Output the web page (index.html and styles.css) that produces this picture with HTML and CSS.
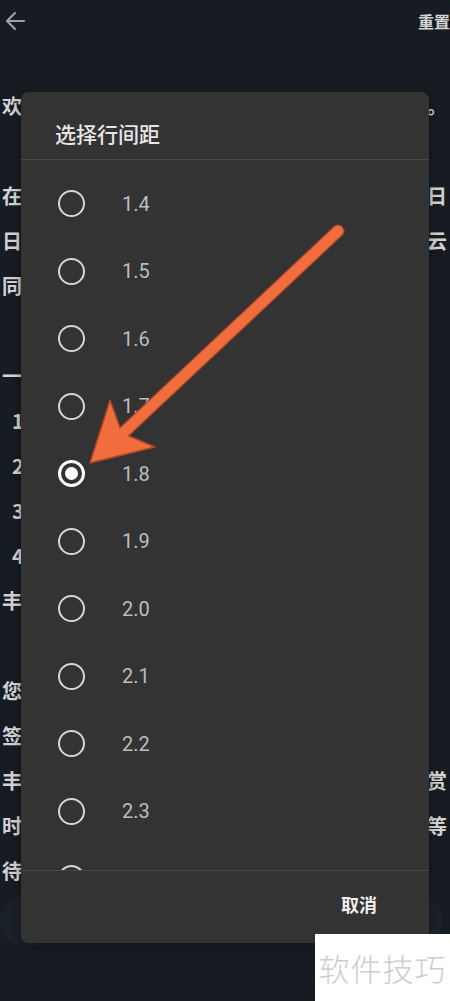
FILE: index.html
```html
<!DOCTYPE html>
<html lang="zh-CN">
<head>
    <meta charset="UTF-8">
    <meta name="viewport" content="width=device-width, initial-scale=1.0">
    <title>选择行间距</title>
    <link rel="stylesheet" href="styles.css">
</head>
<body>
    <div class="topbar">
        <svg class="back" width="22" height="20" viewBox="0 0 22 20">
            <path d="M20 10H3M11 2L3 10l8 8" fill="none" stroke="#9ba1a6" stroke-width="2.2" stroke-linecap="round" stroke-linejoin="round"/>
        </svg>
        <span class="reset">重置</span>
    </div>

    <div class="content">
        <div class="line"><span>欢</span><span>。</span></div>
        <div class="line blank"></div>
        <div class="line"><span>在</span><span>日</span></div>
        <div class="line"><span>日</span><span>云</span></div>
        <div class="line"><span>同</span></div>
        <div class="line blank"></div>
        <div class="line"><span>一</span></div>
        <div class="line item"><span>1</span></div>
        <div class="line item"><span>2</span></div>
        <div class="line item"><span>3</span></div>
        <div class="line item"><span>4</span></div>
        <div class="line"><span>丰</span></div>
        <div class="line blank"></div>
        <div class="line"><span>您</span></div>
        <div class="line"><span>签</span></div>
        <div class="line"><span>丰</span><span>赏</span></div>
        <div class="line"><span>时</span><span>等</span></div>
        <div class="line"><span>待</span></div>
        <div class="bottom-bar"></div>
    </div>

    <div class="dialog">
        <div class="dialog-title">选择行间距</div>
        <div class="options">
            <div class="option"><span class="radio"></span><span class="value">1.4</span></div>
            <div class="option"><span class="radio"></span><span class="value">1.5</span></div>
            <div class="option"><span class="radio"></span><span class="value">1.6</span></div>
            <div class="option"><span class="radio"></span><span class="value">1.7</span></div>
            <div class="option"><span class="radio checked"></span><span class="value">1.8</span></div>
            <div class="option"><span class="radio"></span><span class="value">1.9</span></div>
            <div class="option"><span class="radio"></span><span class="value">2.0</span></div>
            <div class="option"><span class="radio"></span><span class="value">2.1</span></div>
            <div class="option"><span class="radio"></span><span class="value">2.2</span></div>
            <div class="option"><span class="radio"></span><span class="value">2.3</span></div>
            <div class="option"><span class="radio"></span><span class="value">2.4</span></div>
        </div>
        <div class="dialog-footer">
            <span class="cancel">取消</span>
        </div>
    </div>

    <!-- annotation arrow -->
    <svg class="arrow" width="450" height="1001" viewBox="0 0 450 1001">
        <line x1="338" y1="231" x2="122" y2="434" stroke="#a8462a" stroke-width="13" stroke-linecap="round"/>
        <polygon points="90,463 110,400 122,433 155,447" fill="#f26d3d" stroke="#a8462a" stroke-width="1.5" stroke-linejoin="round"/>
        <line x1="338" y1="231" x2="122" y2="434" stroke="#f26d3d" stroke-width="10.5" stroke-linecap="round"/>
    </svg>

    <div class="watermark">软件技巧</div>
</body>
</html>
```

FILE: styles.css
```css
html, body {
    margin: 0;
    padding: 0;
}
body {
    width: 450px;
    height: 1001px;
    overflow: hidden;
    background-color: #161c22;
    font-family: "Noto Sans CJK SC", "Noto Sans", sans-serif;
    position: relative;
}
.topbar {
    height: 45px;
    display: flex;
    align-items: center;
    justify-content: space-between;
    padding-left: 4px;
}
.back {
    margin-top: -4px;
}
.reset {
    color: #d4d4d4;
    font-size: 16px;
    font-weight: 700;
    margin-top: -4px;
}
.content {
    margin-top: 38px;
    padding: 0 3px 0 2px;
}
.line {
    height: 45px;
    line-height: 45px;
    display: flex;
    justify-content: space-between;
    color: #d2d2d2;
    font-size: 20px;
    font-weight: 700;
    white-space: nowrap;
}
.line.item {
    padding-left: 10px;
}
.bottom-bar {
    height: 52px;
    margin: 2px 4px 0 -2px;
    border-radius: 26px;
    background-color: #1a2128;
}
.dialog {
    position: absolute;
    top: 92px;
    left: 21px;
    width: 408px;
    height: 851px;
    background-color: #333333;
    border-radius: 7px;
    box-shadow: 0 2px 10px rgba(0,0,0,0.4);
    display: flex;
    flex-direction: column;
    overflow: hidden;
}
.dialog-title {
    height: 41px;
    padding: 26px 0 0 34px;
    line-height: 30px;
    color: #e6e6e6;
    font-size: 21px;
    font-weight: 500;
    border-bottom: 1px solid #484848;
}
.options {
    height: 711px;
    padding-top: 10px;
    box-sizing: border-box;
    overflow: hidden;
    border-bottom: 1px solid #484848;
}
.option {
    height: 67.5px;
    display: flex;
    align-items: center;
    padding-left: 37px;
}
.radio {
    width: 23px;
    height: 23px;
    border: 2px solid #d6d6d6;
    border-radius: 50%;
    position: relative;
    flex-shrink: 0;
}
.radio.checked {
    border: 3px solid #ffffff;
    width: 21px;
    height: 21px;
}
.radio.checked::after {
    content: "";
    position: absolute;
    left: 4px;
    top: 4px;
    width: 13px;
    height: 13px;
    border-radius: 50%;
    background-color: #ffffff;
}
.value {
    margin-left: 37px;
    color: #bdbdbd;
    font-family: Roboto, "Noto Sans", sans-serif;
    font-size: 20px;
}
.dialog-footer {
    flex: 1;
    display: flex;
    align-items: center;
    justify-content: flex-end;
    padding: 0 52px 6px 0;
}
.cancel {
    color: #efefef;
    font-size: 18px;
    font-weight: 700;
}
.arrow {
    position: absolute;
    top: 0;
    left: 0;
    pointer-events: none;
}
.watermark {
    position: absolute;
    left: 315px;
    top: 934px;
    width: 135px;
    height: 67px;
    background-color: #ffffff;
    color: #cdcdcd;
    font-size: 31px;
    font-weight: 300;
    line-height: 67px;
    text-align: center;
    letter-spacing: 1px;
}
```
